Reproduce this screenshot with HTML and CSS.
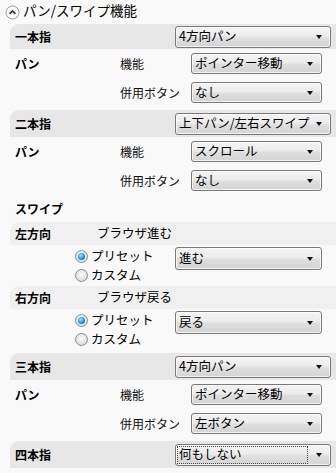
FILE: index.html
```html
<!DOCTYPE html>
<html lang="ja">
<head>
<meta charset="utf-8">
<link rel="stylesheet" href="styles.css">
</head>
<body>
<div class="panel">
  <div class="header">
    <svg class="toggle" width="15" height="15" viewBox="0 0 15 15"><circle cx="7.5" cy="7.5" r="6.5" fill="#fdfdfd" stroke="#a0a0a0"/><path d="M4.6 8.9 L7.5 6 L10.4 8.9" fill="none" stroke="#333" stroke-width="1.7"/></svg>
    <span class="title">パン/スワイプ機能</span>
  </div>

  <div class="bar"><span class="bar-label">一本指</span><div class="select wide"><span class="val">4方向パン</span><span class="arrow"></span></div></div>
  <div class="row"><span class="label">パン</span><span class="sub">機能</span><div class="select"><span class="val">ポインター移動</span><span class="arrow"></span></div></div>
  <div class="row"><span class="label"></span><span class="sub">併用ボタン</span><div class="select"><span class="val">なし</span><span class="arrow"></span></div></div>

  <div class="bar tall"><span class="bar-label">二本指</span><div class="select wide"><span class="val">上下パン/左右スワイプ</span><span class="arrow"></span></div></div>
  <div class="row"><span class="label">パン</span><span class="sub">機能</span><div class="select"><span class="val">スクロール</span><span class="arrow"></span></div></div>
  <div class="row"><span class="label"></span><span class="sub">併用ボタン</span><div class="select"><span class="val">なし</span><span class="arrow"></span></div></div>
  <div class="row heading"><span class="label">スワイプ</span></div>

  <div class="bar light"><span class="bar-label dir">左方向</span><span class="action">ブラウザ進む</span></div>
  <div class="choice">
    <div class="radios">
      <label class="radio"><span class="dot on"></span>プリセット</label>
      <label class="radio"><span class="dot"></span>カスタム</label>
    </div>
    <div class="select mid"><span class="val">進む</span><span class="arrow"></span></div>
  </div>

  <div class="bar light"><span class="bar-label dir">右方向</span><span class="action">ブラウザ戻る</span></div>
  <div class="choice">
    <div class="radios">
      <label class="radio"><span class="dot on"></span>プリセット</label>
      <label class="radio"><span class="dot"></span>カスタム</label>
    </div>
    <div class="select mid"><span class="val">戻る</span><span class="arrow"></span></div>
  </div>

  <div class="bar tall"><span class="bar-label">三本指</span><div class="select wide"><span class="val">4方向パン</span><span class="arrow"></span></div></div>
  <div class="row"><span class="label">パン</span><span class="sub">機能</span><div class="select"><span class="val">ポインター移動</span><span class="arrow"></span></div></div>
  <div class="row"><span class="label"></span><span class="sub">併用ボタン</span><div class="select"><span class="val">左ボタン</span><span class="arrow"></span></div></div>

  <div class="bar tall"><span class="bar-label">四本指</span><div class="select wide focus"><span class="val">何もしない</span><span class="arrow"></span></div></div>
</div>
</body>
</html>
```

FILE: styles.css
```css
* { box-sizing: border-box; }
html, body { margin: 0; padding: 0; }
body {
  background: #f9f9f9;
  font-family: "Noto Sans CJK JP", "Noto Sans", sans-serif;
  font-size: 12px;
  color: #000;
  width: 336px;
  height: 473px;
  overflow: hidden;
}
.panel { display: flex; flex-direction: column; }
.header {
  height: 24px;
  display: flex;
  align-items: center;
  padding-left: 5px;
  gap: 3px;
}
.title { font-size: 13.5px; line-height: 1; margin-top: -2px; }
.bar {
  margin-left: 10px;
  height: 25px;
  background: #e7e7e7;
  border-top-left-radius: 9px;
  display: flex;
  align-items: center;
  justify-content: space-between;
  padding: 0 5px;
}
.bar.tall { height: 27px; margin-top: 3px; }
.bar.light {
  background: #f0f0f0;
  height: 23px;
  justify-content: flex-start;
}
.bar-label { font-weight: bold; line-height: 1; }
.bar-label.dir { width: 82px; }
.action { line-height: 1; font-size: 12.5px; }
.row {
  height: 29px;
  display: flex;
  align-items: center;
  padding-left: 15px;
}
.row.heading { height: 27px; }
.label { width: 105px; font-weight: bold; line-height: 1; }
.sub { width: 71px; line-height: 1; color: #111; }
.select {
  position: relative;
  width: 131px;
  height: 21px;
  border: 1px solid #7a7a7a;
  border-radius: 3px;
  background: linear-gradient(#f4f4f4 0%, #ececec 45%, #dedede 55%, #d4d4d4 100%);
  box-shadow: inset 0 0 0 1px rgba(255,255,255,0.7);
  display: flex;
  align-items: center;
  padding-left: 3px;
}
.select.wide { width: 156px; height: 22px; }
.select.mid { width: 147px; height: 23px; }
.val { line-height: 1; white-space: nowrap; font-size: 12.5px; }
.arrow {
  position: absolute;
  right: 8px;
  top: 50%;
  margin-top: -2px;
  width: 0;
  height: 0;
  border-left: 3.5px solid transparent;
  border-right: 3.5px solid transparent;
  border-top: 4px solid #111;
}
.select.focus::after {
  content: "";
  position: absolute;
  left: 1px;
  top: 1px;
  bottom: 1px;
  right: 22px;
  border: 1px dotted #444;
}
.choice {
  display: flex;
  align-items: flex-start;
  height: 41px;
  padding-top: 2px;
  padding-left: 75px;
}
.radios { display: flex; flex-direction: column; width: 100px; }
.radio {
  display: flex;
  align-items: center;
  height: 19px;
  gap: 3px;
  line-height: 1;
  font-size: 12.5px;
}
.dot {
  width: 13px;
  height: 13px;
  border-radius: 50%;
  border: 1px solid #8e8e8e;
  background: radial-gradient(circle at 50% 40%, #fafafa 0%, #e2e2e2 60%, #cfcfcf 100%);
  position: relative;
}
.dot.on::after {
  content: "";
  position: absolute;
  left: 2px;
  top: 2px;
  width: 7px;
  height: 7px;
  border-radius: 50%;
  background: radial-gradient(circle at 40% 35%, #9fe0ff 0%, #2a9ad8 50%, #0a5c9c 100%);
}
```
